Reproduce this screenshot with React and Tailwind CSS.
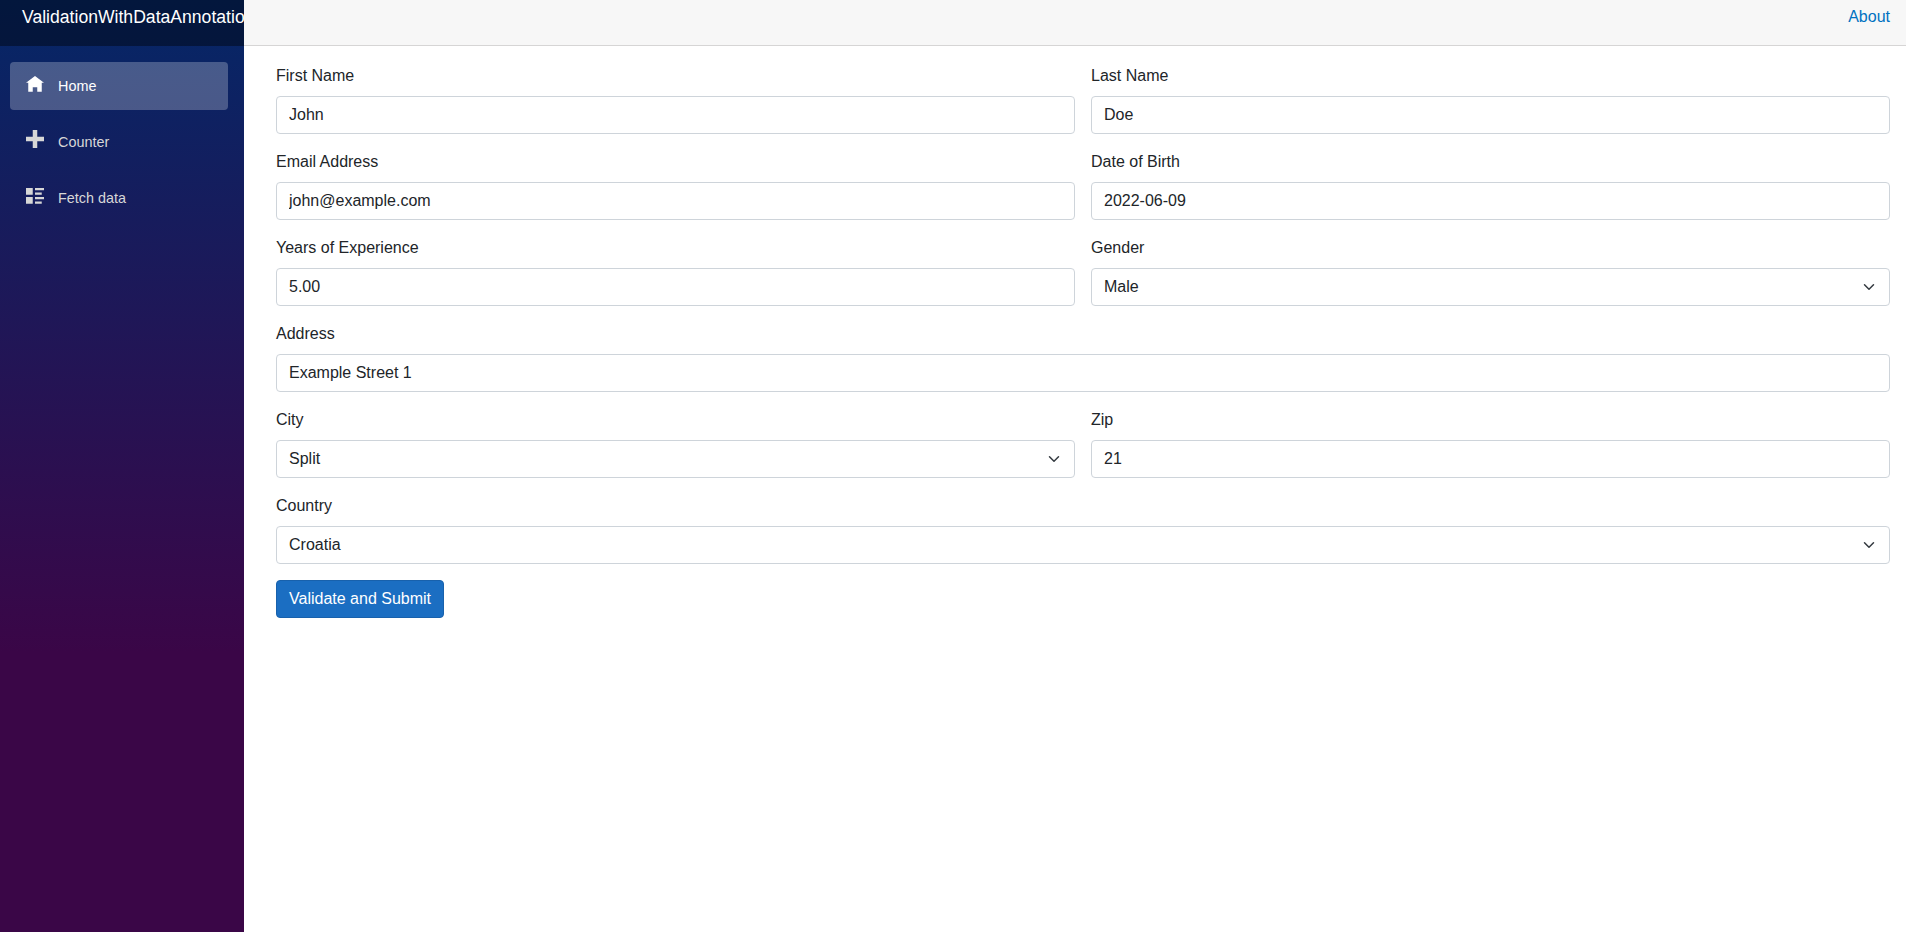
import React from "react";

const navItems = [
  { label: "Home", active: true, iconTop: "mt-[14px]", d: "M4 0l-4 3h1v4h2v-2h2v2h2v-4.03l1 .03-4-3z" },
  { label: "Counter", iconTop: "mt-3", d: "M3 0v3h-3v2h3v3h2v-3h3v-2h-3v-3h-2z" },
  {
    label: "Fetch data",
    iconTop: "mt-[14px]",
    d: "M0 0v3h3v-3h-3zm4 0v1h4v-1h-4zm0 2v1h3v-1h-3zm-4 2v3h3v-3h-3zm4 0v1h4v-1h-4zm0 2v1h3v-1h-3z",
  },
];

const controlClass =
  "block w-full h-[38px] px-3 bg-white border border-[#ced4da] rounded text-base text-[#212529] outline-none";

function Field({ label, value }) {
  return (
    <div className="flex-1 min-w-0">
      <label className="block mb-2 text-base leading-6 text-[#212529]">{label}</label>
      <input type="text" defaultValue={value} className={controlClass} />
    </div>
  );
}

function SelectField({ label, value }) {
  return (
    <div className="flex-1 min-w-0">
      <label className="block mb-2 text-base leading-6 text-[#212529]">{label}</label>
      <div className="relative">
        <select defaultValue={value} className={`${controlClass} appearance-none`}>
          <option>{value}</option>
        </select>
        <svg
          className="absolute right-[13px] top-[13px] w-4 h-3 pointer-events-none"
          viewBox="0 0 16 16"
          fill="none"
          stroke="#343a40"
          strokeWidth="2"
          strokeLinecap="round"
          strokeLinejoin="round"
        >
          <path d="m2 5 6 6 6-6" />
        </svg>
      </div>
    </div>
  );
}

function Sidebar() {
  return (
    <aside className="w-[244px] shrink-0 bg-[linear-gradient(180deg,#052767_0%,#3a0647_70%)]">
      <div className="h-[46px] bg-black/40 pt-[5px] pl-[22px] overflow-hidden whitespace-nowrap text-[17.6px] leading-6 text-white">
        ValidationWithDataAnnotations
      </div>
      <nav className="pt-4 pl-[10px] pr-4 flex flex-col gap-2">
        {navItems.map((item) => (
          <a
            key={item.label}
            href="#"
            className={`flex items-start h-12 pl-4 rounded text-[14.4px] leading-[48px] ${
              item.active ? "bg-white/25 text-white" : "text-[#d7d7d7]"
            }`}
          >
            <svg className={`w-[18px] h-[18px] shrink-0 ${item.iconTop}`} viewBox="0 0 8 8" fill="currentColor">
              <path d={item.d} />
            </svg>
            <span className="ml-[14px]">{item.label}</span>
          </a>
        ))}
      </nav>
    </aside>
  );
}

export default function App() {
  return (
    <div className="flex h-screen overflow-hidden bg-white font-['Liberation_Sans',Arial,sans-serif]">
      <Sidebar />
      <div className="flex-1 min-w-0">
        <header className="h-[46px] bg-[#f7f7f7] border-b border-[#d6d5d5] pt-[5px] pr-4 flex justify-end">
          <a href="#" className="text-base leading-6 text-[#0071c1]">
            About
          </a>
        </header>
        <main className="pt-[18px] pl-8 pr-4">
          <form className="flex flex-col gap-4">
            <div className="flex gap-4">
              <Field label="First Name" value="John" />
              <Field label="Last Name" value="Doe" />
            </div>
            <div className="flex gap-4">
              <Field label="Email Address" value="john@example.com" />
              <Field label="Date of Birth" value="2022-06-09" />
            </div>
            <div className="flex gap-4">
              <Field label="Years of Experience" value="5.00" />
              <SelectField label="Gender" value="Male" />
            </div>
            <Field label="Address" value="Example Street 1" />
            <div className="flex gap-4">
              <SelectField label="City" value="Split" />
              <Field label="Zip" value="21" />
            </div>
            <SelectField label="Country" value="Croatia" />
            <div>
              <button
                type="button"
                className="h-[38px] px-3 rounded bg-[#1b6ec2] border border-[#1861ac] text-base text-white"
              >
                Validate and Submit
              </button>
            </div>
          </form>
        </main>
      </div>
    </div>
  );
}
